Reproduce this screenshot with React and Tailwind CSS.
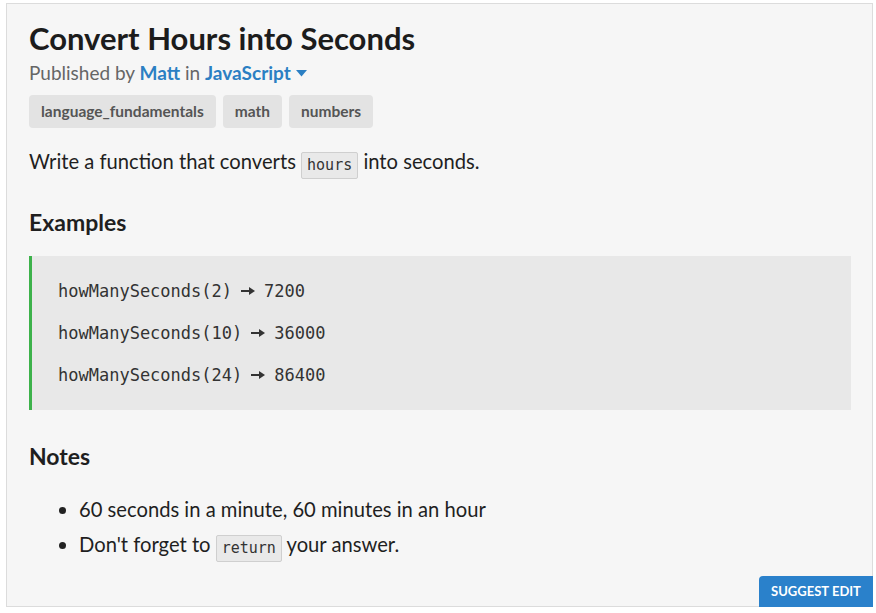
import { useState } from 'react';

const tags = ['language_fundamentals', 'math', 'numbers'];

const examples = [
  ['howManySeconds(2)', '7200'],
  ['howManySeconds(10)', '36000'],
  ['howManySeconds(24)', '86400'],
];

function Code({ children }) {
  return (
    <code className="inline-block rounded-[2px] border border-[#cfcfcf] bg-[#e9e9e9] px-[5px] align-[-1px] font-['DejaVu_Sans_Mono',monospace] text-[15px] leading-[25px] text-[#333]">
      {children}
    </code>
  );
}

function Arrow() {
  return (
    <svg width="14" height="8" viewBox="0 0 14 8" className="mx-[9px] inline-block align-[3px]">
      <path d="M0 3h9v2H0z" fill="#333" />
      <path d="M8 0l6 4-6 4z" fill="#333" />
    </svg>
  );
}

export default function App() {
  const [open, setOpen] = useState(false);

  return (
    <div className="h-[613px] w-[876px] bg-white pl-[6px] pt-[3px] font-['Lato',sans-serif] text-[#1f1f1f]">
      <div className="relative h-[604px] w-[867px] border border-[#dcdcdc] bg-[#f6f6f6] pl-[22px] pr-[21px] pt-[15px]">
        <h1 className="text-[31px] font-bold leading-[38px] text-[#1c1c1c]">Convert Hours into Seconds</h1>

        <p className="mt-[4px] text-[19px] leading-[24px] text-[#666]">
          Published by <span className="font-bold text-[#2b7fc3]">Matt</span> in{' '}
          <button
            onClick={() => setOpen(!open)}
            className="inline-flex items-center gap-[5px] font-bold text-[#2b7fc3]"
          >
            JavaScript
            <svg width="11" height="7" viewBox="0 0 11 7" className="mt-[1px]">
              <path d="M0 0h11L5.5 6.5z" fill="#2b7fc3" />
            </svg>
          </button>
        </p>

        <div className="mt-[10px] flex gap-[7px]">
          {tags.map((t) => (
            <span
              key={t}
              className="flex h-[33px] items-center rounded-[4px] bg-[#e3e3e3] px-[12px] text-[15.5px] font-bold text-[#555]"
            >
              {t}
            </span>
          ))}
        </div>

        <p className="mt-[20px] text-[20.2px] leading-[26px]">
          Write a function that converts <Code>hours</Code> into seconds.
        </p>

        <h2 className="mt-[28px] text-[23px] font-bold leading-[30px]">Examples</h2>

        <div className="mt-[19px] flex flex-col gap-[18px] border-l-[3px] border-[#3db24b] bg-[#e8e8e8] pb-[23px] pl-[26px] pt-[23px] font-['DejaVu_Sans_Mono',monospace] text-[17px] leading-[24px] text-[#333]">
          {examples.map(([call, result]) => (
            <div key={call} className="flex items-center">
              {call}
              <Arrow />
              {result}
            </div>
          ))}
        </div>

        <h2 className="mt-[31px] text-[23px] font-bold leading-[30px]">Notes</h2>

        <ul className="mt-[25px] flex list-disc flex-col gap-[9px] pl-[50px] text-[20.2px] leading-[26px] marker:text-[#222]">
          <li>60 seconds in a minute, 60 minutes in an hour</li>
          <li>
            Don't forget to <Code>return</Code> your answer.
          </li>
        </ul>

        <button className="absolute bottom-[-1px] right-[-1px] h-[31px] w-[114px] rounded-tl-[4px] bg-[#2a81cb] text-[13px] font-bold text-white">
          SUGGEST EDIT
        </button>
      </div>
    </div>
  );
}
